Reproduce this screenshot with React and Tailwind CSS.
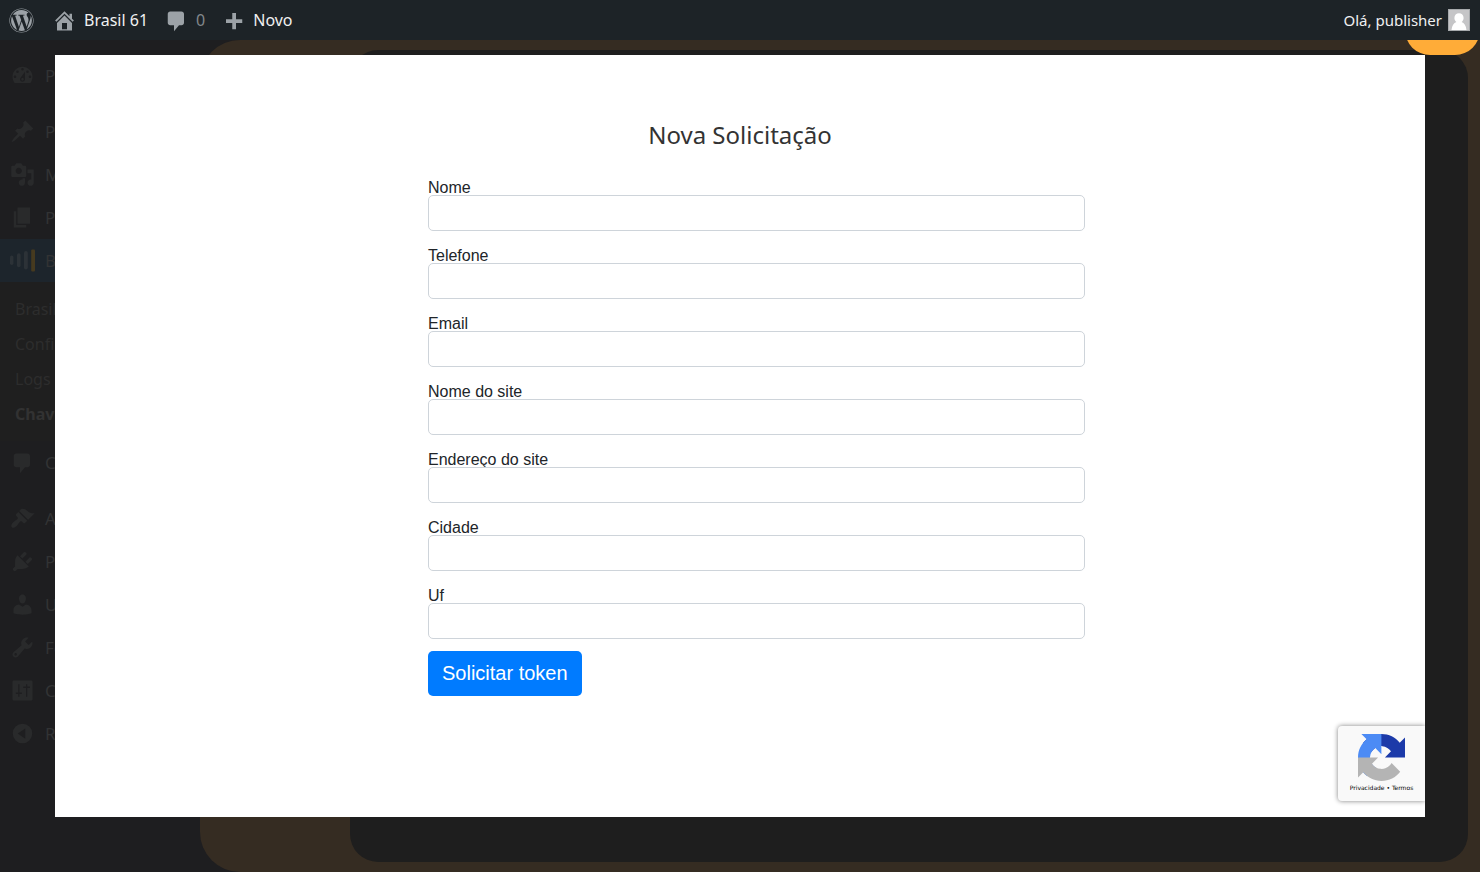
import React from "react";
import { FaWordpress } from "react-icons/fa";

const ICONS = {
  home: "M16 8.5l1.53 1.53-1.06 1.06L10 4.6l-6.47 6.49-1.06-1.06L10 2.5l4 4v-2h2v4zm-6-2.46l6 5.99V18H4v-5.97zM12 17v-5H8v5h4z",
  comment: "M5 2.800h9c1.100 0 2 .9 2 2v7c0 1.100-.9 2-2 2h-2l-4 4.700v-4.700H5c-1.100 0-2-.9-2-2v-7c0-1.100.9-2 2-2z",
  plus: "M17 9v3h-5v5H9v-5H4V9h5V4h3v5z",
  dashboard: "M3.76 16h12.48c1.1-1.37 1.76-3.11 1.76-5 0-4.42-3.58-8-8-8s-8 3.58-8 8c0 1.89.66 3.63 1.76 5zM10 4c.55 0 1 .45 1 1s-.45 1-1 1-1-.45-1-1 .45-1 1-1zM6 6c.55 0 1 .45 1 1s-.45 1-1 1-1-.45-1-1 .45-1 1-1zm8 0c.55 0 1 .45 1 1s-.45 1-1 1-1-.45-1-1 .45-1 1-1zm-5.37 5.55L12 7v6c0 1.1-.9 2-2 2s-2-.9-2-2c0-.57.24-1.08.63-1.45zM4 10c.55 0 1 .45 1 1s-.45 1-1 1-1-.45-1-1 .45-1 1-1zm12 0c.55 0 1 .45 1 1s-.45 1-1 1-1-.45-1-1 .45-1 1-1zm-5 3c0-.55-.45-1-1-1s-1 .45-1 1 .45 1 1 1 1-.45 1-1z",
  pin: "M10.44 3.02l1.82-1.82 6.36 6.35-1.83 1.82c-1.05-.68-2.48-.57-3.41.36l-.75.75c-.92.93-1.04 2.35-.35 3.41l-1.83 1.82-2.41-2.41-2.8 2.79c-.42.42-3.38 2.71-3.8 2.29s1.86-3.39 2.28-3.81l2.79-2.79L4.1 9.36l1.83-1.82c1.05.69 2.48.57 3.4-.36l.75-.75c.93-.92 1.05-2.35.36-3.41z",
  media: "M13 11V4c0-.55-.45-1-1-1h-1.67L9 1H5L3.67 3H2c-.55 0-1 .45-1 1v7c0 .55.45 1 1 1h10c.55 0 1-.45 1-1zM7 4.5c1.38 0 2.5 1.12 2.5 2.5S8.38 9.5 7 9.5 4.5 8.38 4.5 7 5.62 4.5 7 4.5zM14 6h5v10.5c0 1.38-1.12 2.5-2.5 2.5S14 17.88 14 16.5s1.12-2.5 2.5-2.5c.17 0 .34.02.5.05V9h-3V6zm-4 8.05V13h2v3.5c0 1.38-1.12 2.5-2.5 2.5S7 17.88 7 16.5 8.12 14 9.5 14c.17 0 .34.02.5.05z",
  page: "M6 15V2h10v13H6zm-1 1h8v2H3V5h2v11z",
  brush: "M14.48 11.06L7.41 3.99l1.5-1.5c.5-.56 2.3-.47 3.51.32 1.21.8 1.43 1.28 2.91 2.1 1.18.64 2.45 1.26 4.45.85zm-.71.71L6.7 4.7 4.93 6.47c-.39.39-.39 1.02 0 1.41l1.06 1.06c.39.39.39 1.03 0 1.42-.6.6-1.43 1.11-2.21 1.69-.35.26-.7.53-1.01.84C1.43 14.23.4 16.08 1.4 17.07c.99 1 2.84-.03 4.18-1.36.31-.31.58-.66.85-1.02.57-.78 1.08-1.61 1.69-2.21.39-.39 1.02-.39 1.41 0l1.06 1.06c.39.39 1.02.39 1.41 0z",
  plug: "M13.11 4.36L9.87 7.6 8 5.73l3.24-3.24c.35-.34 1.05-.2 1.56.32.52.51.66 1.21.31 1.55zm-8 1.77l.91-1.12 9.01 9.01-1.19.84c-.71.71-2.63 1.16-3.82 1.16H6.14L4.9 17.26c-.59.59-1.54.59-2.12 0-.59-.58-.59-1.53 0-2.12l1.24-1.24v-3.88c0-1.13.4-3.19 1.09-3.89zm7.26 3.97l3.24-3.24c.34-.35 1.04-.21 1.55.31.52.51.66 1.21.31 1.55l-3.24 3.25z",
  user: "M10 9.25c-2.27 0-2.73-3.44-2.73-3.44C7 4.02 7.82 2 9.97 2c2.16 0 2.98 2.02 2.71 3.81 0 0-.41 3.44-2.68 3.44zm0 2.57L12.72 10c2.39 0 4.52 2.33 4.52 4.53v2.49s-3.65 1.13-7.24 1.13c-3.65 0-7.24-1.13-7.24-1.13v-2.49c0-2.25 1.94-4.48 4.47-4.48z",
  wrench: "M16.68 9.77c-1.34 1.34-3.3 1.67-4.95.99l-5.41 6.52c-.99.99-2.59.99-3.58 0s-.99-2.59 0-3.57l6.52-5.42c-.68-1.65-.35-3.61.99-4.95 1.28-1.28 3.12-1.62 4.72-1.06l-2.89 2.89 2.82 2.82 2.86-2.87c.53 1.58.18 3.39-1.08 4.65zM3.81 16.21c.4.39 1.04.39 1.43 0 .4-.4.4-1.04 0-1.43-.39-.4-1.03-.4-1.43 0-.39.39-.39 1.03 0 1.43z",
  sliders: "M18 17V3c0-.55-.45-1-1-1H3c-.55 0-1 .45-1 1v14c0 .55.45 1 1 1h14c.55 0 1-.45 1-1zM6.600 5h1v6.500h1.900v1.200H7.600V15h-1v-2.300H4.700v-1.200h1.900zM12.800 5h1v1.800h2.200V8h-2.200v7h-1V8h-2.200V6.800h2.200z",
  collapse: "M10 2.2a7.8 7.8 0 1 0 0 15.6a7.8 7.8 0 1 0 0-15.6zM12.2 5.9v8.2L6.2 10z",
};

function Icon({ name, className }) {
  return (
    <svg viewBox="0 0 20 20" fill="currentColor" fillRule="evenodd" aria-hidden="true" className={className}>
      <path d={ICONS[name]} />
    </svg>
  );
}

function BarsIcon() {
  return (
    <svg viewBox="0 0 25 25" aria-hidden="true" className="size-[25px] shrink-0">
      <rect x="0" y="7.500" width="3.400" height="9.500" rx="1.700" fill="#2c3237" />
      <rect x="7" y="5.200" width="3.600" height="14" rx="1.800" fill="#2c3237" />
      <rect x="14" y="3" width="3.800" height="18.500" rx="1.900" fill="#2c3237" />
      <rect x="21.200" y="1.500" width="3.800" height="22" rx="1" fill="#463a1f" />
    </svg>
  );
}

function MenuItem({ icon, children, active }) {
  return (
    <li className={active ? "bg-[#1d252c]" : ""}>
      <a href="#" className="flex h-[43px] items-center gap-2.5 pl-2.5 text-[17px] text-[#323334]">
        {icon ? <Icon name={icon} className="size-[25px] shrink-0 text-[#292a2b]" /> : <BarsIcon />}
        <span className="whitespace-nowrap">{children}</span>
      </a>
    </li>
  );
}

function Sidebar() {
  return (
    <nav aria-label="Menu principal" className="w-[200px] shrink-0 bg-[#1e1e20] pt-3.5">
      <ul>
        <MenuItem icon="dashboard">Painel</MenuItem>
      </ul>
      <ul className="mt-[13px]">
        <MenuItem icon="pin">Posts</MenuItem>
        <MenuItem icon="media">Mídia</MenuItem>
        <MenuItem icon="page">Páginas</MenuItem>
        <MenuItem active>Brasil 61</MenuItem>
        <li className="bg-[#1f1f1f] pb-2.5 pt-[9px]">
          <ul className="text-base text-[#2d2d2d]">
            <li><a href="#" className="flex h-[35px] items-center pl-[15px]">Brasil 61</a></li>
            <li><a href="#" className="flex h-[35px] items-center pl-[15px]">Configurações</a></li>
            <li><a href="#" className="flex h-[35px] items-center pl-[15px]">Logs</a></li>
            <li><a href="#" className="flex h-[35px] items-center pl-[15px] font-bold text-[#323232]">Chaves</a></li>
          </ul>
        </li>
        <MenuItem icon="comment">Comentários</MenuItem>
      </ul>
      <ul className="mt-[13px]">
        <MenuItem icon="brush">Aparência</MenuItem>
        <MenuItem icon="plug">Plugins</MenuItem>
        <MenuItem icon="user">Usuários</MenuItem>
        <MenuItem icon="wrench">Ferramentas</MenuItem>
        <MenuItem icon="sliders">Configurações</MenuItem>
        <MenuItem icon="collapse">Recolher menu</MenuItem>
      </ul>
    </nav>
  );
}

function AdminBar() {
  return (
    <header className="relative z-20 h-10 text-base text-[#f0f0f1]">
      <div className="absolute right-0 top-[5px] h-[50px] w-[75px] rounded-full bg-[#ffac38]" />
      <div className="relative flex h-full items-center justify-between bg-[#1d2327] pl-[9px] pr-2.5">
        <nav aria-label="Barra de ferramentas" className="flex items-center gap-4">
          <a href="#" aria-label="WordPress" className="mr-0.5">
            <FaWordpress className="size-[25px] text-[#9ca2a7]" />
          </a>
          <a href="#" className="flex items-center gap-[7px]">
            <Icon name="home" className="size-[25px] text-[#9ca2a7]" />
            Brasil 61
          </a>
          <a href="#" className="flex items-center gap-[7px] text-[#82878b]">
            <Icon name="comment" className="size-[25px] text-[#9ca2a7]" />
            0
          </a>
          <a href="#" className="flex items-center gap-[7px]">
            <Icon name="plus" className="size-[25px] text-[#9ca2a7]" />
            Novo
          </a>
        </nav>
        <a href="#" className="flex items-center gap-1.5 text-[15px]">
          Olá, publisher
          <svg viewBox="0 0 22 22" aria-hidden="true" className="size-[22px]">
            <rect width="22" height="22" fill="#a7aaad" />
            <rect x="1" y="1" width="20" height="20" fill="#c5c5c7" />
            <path d="M11 4.300c2.700 0 4.600 2 4.600 4.700 0 1.800-.8 3.200-2 4 2.700.9 4.400 3.500 4.900 8H3.500c.5-4.500 2.200-7.100 4.900-8-1.200-.8-2-2.200-2-4 0-2.700 1.900-4.700 4.600-4.700z" fill="#fff" />
          </svg>
        </a>
      </div>
    </header>
  );
}

function RecaptchaBadge() {
  return (
    <div className="absolute bottom-4 right-0 flex h-[75px] w-[87px] flex-col items-center rounded-l-sm bg-[#f9f9f9] pt-2 shadow-[0_0_5px_gray]">
      <svg viewBox="0 0 64 64" aria-hidden="true" className="size-[47px]">
        <path fill="#1c3aa9" d="M64 31.955l-.012-1.370V4.687l-7.160 7.160C50.968 4.674 42.033.093 32.029.093c-10.410 0-19.660 4.960-25.496 12.638l11.736 11.860a15.550 15.550 0 0 1 4.754-5.334c2.050-1.600 4.952-2.906 8.968-2.906.485 0 .860.057 1.135.163 4.976.393 9.288 3.140 11.828 7.124l-8.307 8.307L64 31.953" />
        <path fill="#4c8bf5" d="M31.862.094l-1.370.011H4.594l7.160 7.160C4.580 13.125 0 22.060 0 32.064c0 10.410 4.960 19.660 12.638 25.495l11.860-11.736a15.550 15.550 0 0 1-5.334-4.754c-1.600-2.050-2.906-4.952-2.906-8.968 0-.485.057-.860.163-1.135.393-4.976 3.140-9.288 7.124-11.828l8.307 8.307L31.860.095" />
        <path fill="#b4b4b4" d="M.001 32.045l.012 1.370v25.898l7.160-7.160c5.860 7.173 14.795 11.754 24.799 11.754 10.410 0 19.660-4.960 25.495-12.638l-11.736-11.860a15.550 15.550 0 0 1-4.754 5.334c-2.050 1.600-4.952 2.906-8.968 2.906-.485 0-.860-.057-1.135-.163-4.976-.393-9.288-3.140-11.828-7.124l8.307-8.307c-10.522.040-22.400.066-27.295-.005" />
      </svg>
      <p className="whitespace-pre font-['DejaVu_Sans',sans-serif] text-[6px] leading-[14px] text-black">
        <a href="#">Privacidade</a> • <a href="#">Termos</a>
      </p>
    </div>
  );
}

const FIELDS = [
  ["nome", "Nome", "text"],
  ["telefone", "Telefone", "tel"],
  ["email", "Email", "email"],
  ["site", "Nome do site", "text"],
  ["endereco", "Endereço do site", "text"],
  ["cidade", "Cidade", "text"],
  ["uf", "Uf", "text"],
];

function RequestDialog() {
  return (
    <div role="dialog" aria-labelledby="titulo" className="absolute inset-x-[55px] bottom-[55px] top-[55px] z-10 overflow-hidden bg-white pt-16">
      <h1 id="titulo" className="text-center text-2xl text-[#333333]">Nova Solicitação</h1>
      <div className="mt-[30px] grid grid-cols-[373fr_657fr_340fr]">
        <form className="col-start-2 font-['Liberation_Sans',Arial,sans-serif] text-[#212529]">
          <div className="flex flex-col gap-[18px]">
            {FIELDS.map(([id, label, type]) => (
              <div key={id} className="flex flex-col">
                <label htmlFor={id} className="text-base leading-[14px]">{label}</label>
                <input id={id} type={type} className="h-9 w-full rounded-[5px] border border-[#ced4da] bg-white px-3.5" />
              </div>
            ))}
          </div>
          <button type="button" className="mt-3 h-[45px] rounded-[5px] bg-[#007bff] px-3.5 pb-0.5 text-xl text-white">
            Solicitar token
          </button>
        </form>
      </div>
      <RecaptchaBadge />
    </div>
  );
}

export default function App() {
  return (
    <div className="relative flex min-h-screen flex-col bg-[#1e1e20] font-['Noto_Sans',sans-serif]">
      <AdminBar />
      <div className="flex grow">
        <Sidebar />
        <main className="flex grow rounded-l-[40px] bg-[#352c22] pb-2.5 pl-[150px] pr-3 pt-2.5">
          <div className="grow rounded-[28px] bg-[#1e1e1e]" />
        </main>
      </div>
      <RequestDialog />
    </div>
  );
}
